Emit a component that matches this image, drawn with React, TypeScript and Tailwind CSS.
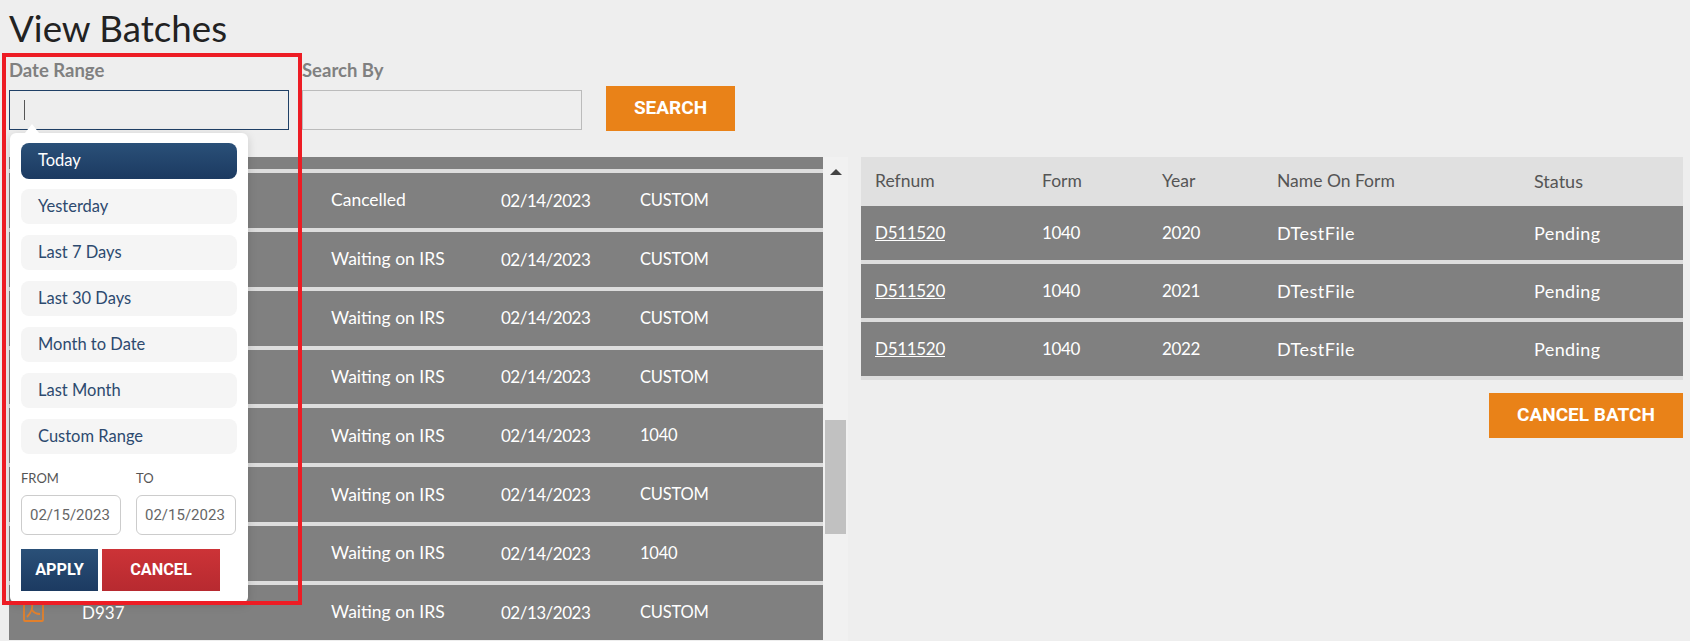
const batches = [
  { status: 'Cancelled', date: '02/14/2023', form: 'CUSTOM', ref: '' },
  { status: 'Waiting on IRS', date: '02/14/2023', form: 'CUSTOM', ref: '' },
  { status: 'Waiting on IRS', date: '02/14/2023', form: 'CUSTOM', ref: '' },
  { status: 'Waiting on IRS', date: '02/14/2023', form: 'CUSTOM', ref: '' },
  { status: 'Waiting on IRS', date: '02/14/2023', form: '1040', ref: '' },
  { status: 'Waiting on IRS', date: '02/14/2023', form: 'CUSTOM', ref: '' },
  { status: 'Waiting on IRS', date: '02/14/2023', form: '1040', ref: '' },
  { status: 'Waiting on IRS', date: '02/13/2023', form: 'CUSTOM', ref: 'D937' },
];

const returns = [
  { refnum: 'D511520', form: '1040', year: '2020', name: 'DTestFile', status: 'Pending' },
  { refnum: 'D511520', form: '1040', year: '2021', name: 'DTestFile', status: 'Pending' },
  { refnum: 'D511520', form: '1040', year: '2022', name: 'DTestFile', status: 'Pending' },
];

const ranges = ['Yesterday', 'Last 7 Days', 'Last 30 Days', 'Month to Date', 'Last Month', 'Custom Range'];

const PdfIcon = () => (
  <svg width="21" height="20" viewBox="0 0 21 20" fill="none" stroke="#e2802c" strokeWidth="1.8">
    <rect x="1" y="1" width="19" height="18" rx="1" />
    <path d="M9 1c1 5-1 10-5 14M9 8c2 3 5 4 8 4" />
  </svg>
);

const DatePicker = () => (
  <div className="absolute left-[10px] top-[133px] z-10 h-[470px] w-[238px] rounded-md bg-white px-[11px] pt-[10px] text-[16.5px] shadow-[0_2px_10px_rgba(0,0,0,0.15)]">
    <div className="absolute left-[15px] top-[-9px] h-0 w-0 border-x-[7px] border-b-[9px] border-x-transparent border-b-white" />
    <div className="flex h-[36px] w-[216px] items-center rounded-lg bg-gradient-to-b from-[#2a5078] to-[#1c3a61] pb-[2px] pl-[17px] text-white">
      Today
    </div>
    <div className="mt-[10px] flex flex-col gap-[11px]">
      {ranges.map((range) => (
        <div key={range} className="flex h-[35px] w-[216px] items-center rounded-lg bg-[#f5f5f5] pl-[17px] text-[#2d4a6f]">
          {range}
        </div>
      ))}
    </div>
    <div className="mt-[14px] flex gap-[15px]">
      {['FROM', 'TO'].map((label) => (
        <div key={label} className="w-[100px]">
          <div className="text-[13px] leading-[20px] text-[#555]">{label}</div>
          <div className="mt-[7px] flex h-[40px] items-center rounded-md border border-[#ccc] pl-[8px] font-['Roboto',sans-serif] text-[15px] text-[#666]">
            02/15/2023
          </div>
        </div>
      ))}
    </div>
    <div className="mt-[14px] flex gap-[4px] font-['Roboto',sans-serif] text-[16.3px] font-bold text-white">
      <button type="button" className="h-[42px] w-[77px] bg-gradient-to-b from-[#2a5078] to-[#1c3a61]">
        APPLY
      </button>
      <button type="button" className="h-[42px] w-[118px] bg-gradient-to-b from-[#cc3337] to-[#b72a30]">
        CANCEL
      </button>
    </div>
  </div>
);

export default function App() {
  return (
    <div className="relative h-[641px] overflow-hidden bg-[#eeeeee] font-['Lato',sans-serif] text-[17.5px]">
      <h1 className="h-[57px] pl-[9px] pt-[4px] text-[36.7px] leading-[48px] text-[#222]">View Batches</h1>

      <div className="flex h-[100px] pl-[9px]">
        <div className="w-[280px]">
          <label className="block h-[33px] pt-[3px] text-[18.5px] font-bold leading-[20px] text-[#808080]">Date Range</label>
          <div className="flex h-[40px] items-center border border-[#1f3f66] pl-[14px]">
            <div className="h-[20px] w-px bg-[#555]" />
          </div>
        </div>
        <div className="ml-[13px] w-[280px]">
          <label className="block h-[33px] pt-[3px] text-[18.5px] font-bold leading-[20px] text-[#808080]">Search By</label>
          <div className="h-[40px] border border-[#bbb]" />
        </div>
        <button
          type="button"
          className="ml-[24px] mt-[29px] h-[45px] w-[129px] bg-[#e98218] font-['Roboto',sans-serif] text-[19px] font-bold text-white"
        >
          SEARCH
        </button>
      </div>

      <div className="flex pl-[9px]">
        <div className="w-[814px]">
          <div className="h-[12px] bg-[#808080]" />
          {batches.map((batch, i) => (
            <div key={i} className="border-t-4 border-[#dddddd]">
              <div className="grid h-[54.86px] grid-cols-[73px_249px_170px_139px_1fr] items-center bg-[#808080] text-white">
                <div className="pl-[14px]">
                  <PdfIcon />
                </div>
                <div className="text-[17px]">{batch.ref}</div>
                <div>{batch.status}</div>
                <div className="text-[17px] tracking-[-0.5px]">{batch.date}</div>
                <div className="text-[16.5px] tracking-[-0.2px]">{batch.form}</div>
              </div>
            </div>
          ))}
        </div>

        {/* scrollbar */}
        <div className="h-[484px] w-[25px] bg-[#f1f1f1] px-[2px]">
          <div className="mx-auto mt-[12px] h-0 w-0 border-x-[6px] border-b-[6px] border-x-transparent border-b-[#444]" />
          <div className="mt-[245px] h-[114px] bg-[#c1c1c1]" />
        </div>

        <div className="ml-[13px] w-[822px]">
          <div className="grid h-[49px] grid-cols-[167px_120px_115px_257px_1fr] items-center bg-[#e0e0e0] pl-[14px] text-[#555]">
            <div>Refnum</div>
            <div>Form</div>
            <div>Year</div>
            <div>Name On Form</div>
            <div className="text-[18px]">Status</div>
          </div>
          <div className="bg-[#dddddd] pb-[4px]">
            {returns.map((row) => (
              <div
                key={row.year}
                className="grid h-[54px] grid-cols-[167px_120px_115px_257px_1fr] items-center bg-[#808080] pl-[14px] text-white [&:not(:first-child)]:mt-[4px]"
              >
                <a className="text-[17px] tracking-[-0.3px] underline">{row.refnum}</a>
                <div className="text-[17px] tracking-[-0.4px]">{row.form}</div>
                <div className="text-[17px] tracking-[-0.4px]">{row.year}</div>
                <div className="text-[18px] tracking-[0.5px]">{row.name}</div>
                <div className="text-[18px] tracking-[0.4px]">{row.status}</div>
              </div>
            ))}
          </div>
          <div className="mt-[13px] flex justify-end">
            <button
              type="button"
              className="h-[45px] w-[194px] bg-[#e98218] font-['Roboto',sans-serif] text-[19px] font-bold text-white"
            >
              CANCEL BATCH
            </button>
          </div>
        </div>
      </div>

      <DatePicker />
      <div className="pointer-events-none absolute left-[2px] top-[53px] z-20 h-[552px] w-[300px] border-4 border-[#ed1c24]" />
    </div>
  );
}
